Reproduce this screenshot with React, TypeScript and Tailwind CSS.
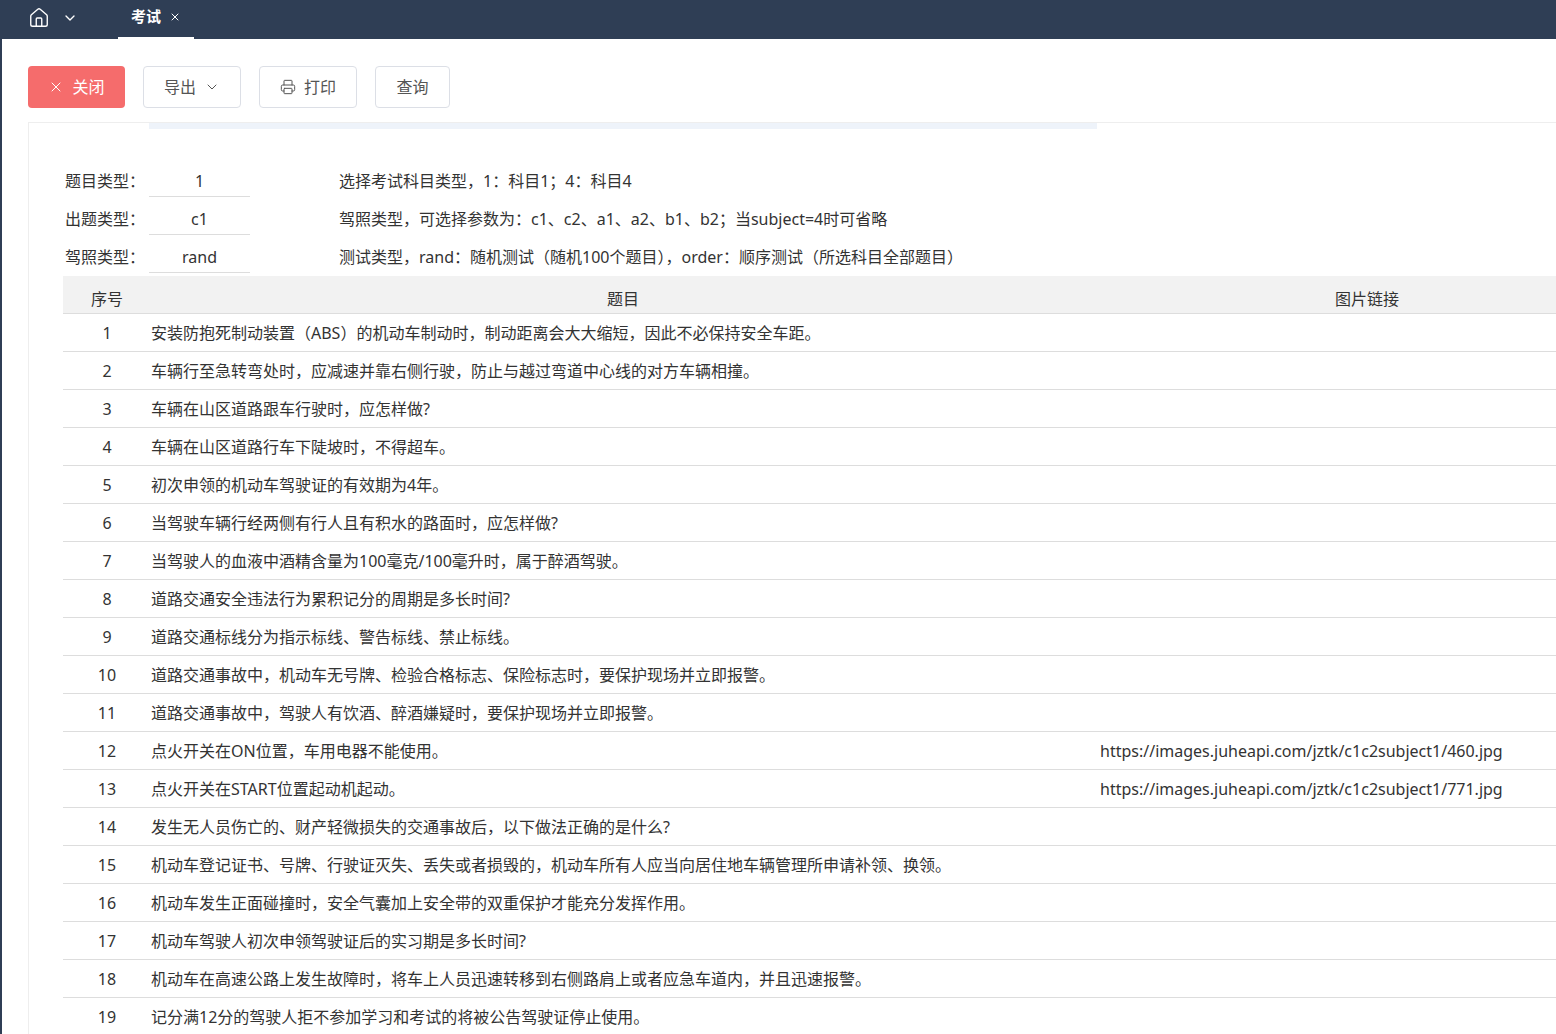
import { ChevronDown, House, Printer, X } from "lucide-react";

const rows: [string, string?][] = [
  ["安装防抱死制动装置（ABS）的机动车制动时，制动距离会大大缩短，因此不必保持安全车距。"],
  ["车辆行至急转弯处时，应减速并靠右侧行驶，防止与越过弯道中心线的对方车辆相撞。"],
  ["车辆在山区道路跟车行驶时，应怎样做?"],
  ["车辆在山区道路行车下陡坡时，不得超车。"],
  ["初次申领的机动车驾驶证的有效期为4年。"],
  ["当驾驶车辆行经两侧有行人且有积水的路面时，应怎样做?"],
  ["当驾驶人的血液中酒精含量为100毫克/100毫升时，属于醉酒驾驶。"],
  ["道路交通安全违法行为累积记分的周期是多长时间?"],
  ["道路交通标线分为指示标线、警告标线、禁止标线。"],
  ["道路交通事故中，机动车无号牌、检验合格标志、保险标志时，要保护现场并立即报警。"],
  ["道路交通事故中，驾驶人有饮酒、醉酒嫌疑时，要保护现场并立即报警。"],
  ["点火开关在ON位置，车用电器不能使用。", "https://images.juheapi.com/jztk/c1c2subject1/460.jpg"],
  ["点火开关在START位置起动机起动。", "https://images.juheapi.com/jztk/c1c2subject1/771.jpg"],
  ["发生无人员伤亡的、财产轻微损失的交通事故后，以下做法正确的是什么?"],
  ["机动车登记证书、号牌、行驶证灭失、丢失或者损毁的，机动车所有人应当向居住地车辆管理所申请补领、换领。"],
  ["机动车发生正面碰撞时，安全气囊加上安全带的双重保护才能充分发挥作用。"],
  ["机动车驾驶人初次申领驾驶证后的实习期是多长时间?"],
  ["机动车在高速公路上发生故障时，将车上人员迅速转移到右侧路肩上或者应急车道内，并且迅速报警。"],
  ["记分满12分的驾驶人拒不参加学习和考试的将被公告驾驶证停止使用。"],
];

const params = [
  ["题目类型：", "1", "选择考试科目类型，1：科目1；4：科目4"],
  ["出题类型：", "c1", "驾照类型，可选择参数为：c1、c2、a1、a2、b1、b2；当subject=4时可省略"],
  ["驾照类型：", "rand", "测试类型，rand：随机测试（随机100个题目），order：顺序测试（所选科目全部题目）"],
];

export default function App() {
  return (
    <div
      className="h-[1034px] overflow-hidden bg-[#2f3e55] text-[16px] text-[#333]"
      style={{ fontFamily: '"Noto Sans", "Noto Sans CJK SC", sans-serif' }}
    >
      <div className="flex h-[39px] items-center text-white">
        <div className="flex items-center gap-3 pb-1 pl-[28px]">
          <House className="h-[22px] w-[22px]" strokeWidth={1.5} />
          <ChevronDown className="h-4 w-4" />
        </div>
        <div className="ml-[40px] flex h-full items-center gap-2 border-b-2 border-white px-[13px] pb-1">
          <span className="text-[15px] font-bold">考试</span>
          <X className="h-3 w-3" />
        </div>
      </div>
      <div className="ml-[2px] h-full bg-white">
        <div className="flex gap-[18px] px-[26px] pt-[27px] text-[16px]">
          <button className="flex h-[42px] w-[97px] items-center justify-center gap-2 rounded bg-[#f56c6c] text-white">
            <X className="h-4 w-4" strokeWidth={1.5} />
            关闭
          </button>
          <button className="flex h-[42px] w-[98px] items-center justify-center gap-2 rounded border border-[#dcdfe6] text-[#555]">
            导出
            <ChevronDown className="h-4 w-4" strokeWidth={1.5} />
          </button>
          <button className="flex h-[42px] w-[98px] items-center justify-center gap-2 rounded border border-[#dcdfe6] text-[#555]">
            <Printer className="h-4 w-4" strokeWidth={1.5} />
            打印
          </button>
          <button className="flex h-[42px] w-[75px] items-center justify-center rounded border border-[#dcdfe6] text-[#555]">
            查询
          </button>
        </div>
        <div className="ml-[26px] mt-[14px] border-l border-t border-[#eee]">
          <div className="ml-[120px] h-[6px] w-[948px] bg-[#eef3fa]" />
          <div className="flex flex-col gap-[6px] pl-[36px] pt-[36px]">
            {params.map(([l, v, d]) => (
              <div key={l} className="flex h-[32px] items-center">
                <span className="w-[84px]">{l}</span>
                <span className="flex h-full w-[101px] items-center justify-center border-b border-[#ddd]">{v}</span>
                <span className="ml-[89px]">{d}</span>
              </div>
            ))}
          </div>
          <div className="ml-[34px] mt-[3px]">
            <div className="flex h-[38px] items-end border-b border-[#ddd] bg-[#f2f2f2] pb-[2px]">
              <span className="w-[88px] text-center">序号</span>
              <span className="w-[944px] text-center">题目</span>
              <span className="flex-1 pl-[240px]">图片链接</span>
            </div>
            {rows.map(([t, u], i) => (
              <div key={i} className="flex h-[38px] items-center border-b border-[#ddd]">
                <span className="w-[88px] text-center">{i + 1}</span>
                <span className="w-[949px] whitespace-nowrap">{t}</span>
                <span className="flex-1 whitespace-nowrap">{u}</span>
              </div>
            ))}
          </div>
        </div>
      </div>
    </div>
  );
}
